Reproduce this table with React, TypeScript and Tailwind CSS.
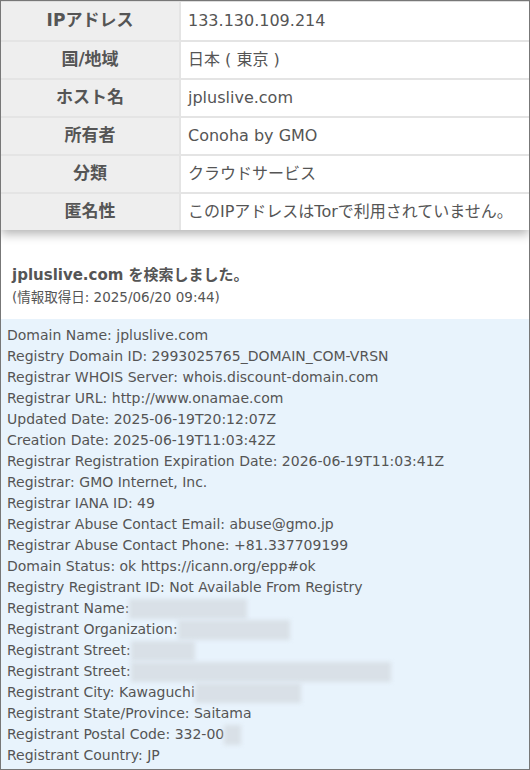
import React from 'react';

const rows: [string, string][] = [
  ['IPアドレス', '133.130.109.214'],
  ['国/地域', '日本 ( 東京 )'],
  ['ホスト名', 'jpluslive.com'],
  ['所有者', 'Conoha by GMO'],
  ['分類', 'クラウドサービス'],
  ['匿名性', 'このIPアドレスはTorで利用されていません。'],
];

// [text, blurred width]
const whois: [string, number][] = [
  ['Domain Name: jpluslive.com', 0],
  ['Registry Domain ID: 2993025765_DOMAIN_COM-VRSN', 0],
  ['Registrar WHOIS Server: whois.discount-domain.com', 0],
  ['Registrar URL: http://www.onamae.com', 0],
  ['Updated Date: 2025-06-19T20:12:07Z', 0],
  ['Creation Date: 2025-06-19T11:03:42Z', 0],
  ['Registrar Registration Expiration Date: 2026-06-19T11:03:41Z', 0],
  ['Registrar: GMO Internet, Inc.', 0],
  ['Registrar IANA ID: 49', 0],
  ['Registrar Abuse Contact Email: abuse@gmo.jp', 0],
  ['Registrar Abuse Contact Phone: +81.337709199', 0],
  ['Domain Status: ok https://icann.org/epp#ok', 0],
  ['Registry Registrant ID: Not Available From Registry', 0],
  ['Registrant Name: ', 118],
  ['Registrant Organization: ', 112],
  ['Registrant Street: ', 64],
  ['Registrant Street: ', 260],
  ['Registrant City: Kawaguchi', 106],
  ['Registrant State/Province: Saitama', 0],
  ['Registrant Postal Code: 332-00', 17],
  ['Registrant Country: JP', 0],
];

const jp = { fontFamily: '"DejaVu Sans", "Noto Sans CJK JP", sans-serif' };

export default function App() {
  return (
    <div className="w-[530px] h-[770px] border border-[#777] bg-white overflow-hidden flex flex-col text-[#555]" style={jp}>
      <div className="shadow-[0_4px_10px_rgba(0,0,0,0.3)] border-t border-[#ddd]">
        {rows.map(([k, v], i) => (
          <div key={k} className={`flex h-[38px] ${i > 0 ? 'border-t-2 border-[#e4e4e4]' : ''}`}>
            <div className="w-[180px] shrink-0 bg-[#eeeeee] border-r-2 border-[#e4e4e4] flex items-center justify-center font-bold text-[17px]">
              {k}
            </div>
            <div className="flex-1 flex items-center pl-[7px] text-[16px] whitespace-nowrap">{v}</div>
          </div>
        ))}
      </div>
      <div className="pt-[35px] pl-[11px] pb-[12px]">
        <div className="font-bold text-[15px] leading-[20px]">jpluslive.com を検索しました。</div>
        <div className="text-[13.5px] leading-[20px] mt-[2px]">(情報取得日: 2025/06/20 09:44)</div>
      </div>
      <div className="flex-1 bg-[#e8f3fc] pt-[6px] pl-[6px] text-[14px] leading-[21px]">
        {whois.map(([t, b], i) => (
          <div key={i} className="flex items-center whitespace-nowrap">
            <span>{t}</span>
            {b > 0 && <span className="inline-block h-[20px] bg-[#d9e0e7] blur-[2px]" style={{ width: b }} />}
          </div>
        ))}
      </div>
    </div>
  );
}
